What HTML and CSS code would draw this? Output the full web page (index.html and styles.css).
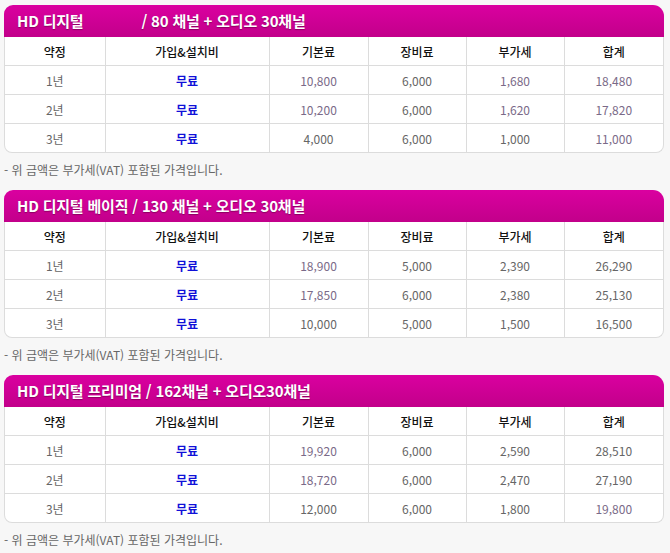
FILE: index.html
```html
<!DOCTYPE html>
<html lang="ko">
<head>
<meta charset="utf-8">
<link rel="stylesheet" href="styles.css">
</head>
<body>
<div class="page">
  <section class="plan">
    <div class="plan-title">HD 디지털<span class="gap"></span>/ 80 채널 + 오디오 30채널</div>
    <div class="table-wrap">
      <table class="price">
        <colgroup><col class="c1"><col class="c2"><col class="c3"><col class="c4"><col class="c5"><col class="c6"></colgroup>
        <thead><tr><th>약정</th><th>가입&amp;설치비</th><th>기본료</th><th>장비료</th><th>부가세</th><th>합계</th></tr></thead>
        <tbody>
          <tr><td>1년</td><td class="free">무료</td><td class="pk">10,800</td><td>6,000</td><td class="pk">1,680</td><td class="pk">18,480</td></tr>
          <tr><td>2년</td><td class="free">무료</td><td class="pk">10,200</td><td>6,000</td><td class="pk">1,620</td><td class="pk">17,820</td></tr>
          <tr><td>3년</td><td class="free">무료</td><td>4,000</td><td>6,000</td><td>1,000</td><td class="pk">11,000</td></tr>
        </tbody>
      </table>
    </div>
    <p class="note">- 위 금액은 부가세(VAT) 포함된 가격입니다.</p>
  </section>

  <section class="plan">
    <div class="plan-title">HD 디지털 베이직 / 130 채널 + 오디오 30채널</div>
    <div class="table-wrap">
      <table class="price">
        <colgroup><col class="c1"><col class="c2"><col class="c3"><col class="c4"><col class="c5"><col class="c6"></colgroup>
        <thead><tr><th>약정</th><th>가입&amp;설치비</th><th>기본료</th><th>장비료</th><th>부가세</th><th>합계</th></tr></thead>
        <tbody>
          <tr><td>1년</td><td class="free">무료</td><td class="pk">18,900</td><td>5,000</td><td>2,390</td><td>26,290</td></tr>
          <tr><td>2년</td><td class="free">무료</td><td class="pk">17,850</td><td>6,000</td><td>2,380</td><td>25,130</td></tr>
          <tr><td>3년</td><td class="free">무료</td><td>10,000</td><td>5,000</td><td>1,500</td><td>16,500</td></tr>
        </tbody>
      </table>
    </div>
    <p class="note">- 위 금액은 부가세(VAT) 포함된 가격입니다.</p>
  </section>

  <section class="plan">
    <div class="plan-title">HD 디지털 프리미엄 / 162채널 + 오디오30채널</div>
    <div class="table-wrap">
      <table class="price">
        <colgroup><col class="c1"><col class="c2"><col class="c3"><col class="c4"><col class="c5"><col class="c6"></colgroup>
        <thead><tr><th>약정</th><th>가입&amp;설치비</th><th>기본료</th><th>장비료</th><th>부가세</th><th>합계</th></tr></thead>
        <tbody>
          <tr><td>1년</td><td class="free">무료</td><td class="pk">19,920</td><td>6,000</td><td>2,590</td><td>28,510</td></tr>
          <tr><td>2년</td><td class="free">무료</td><td class="pk">18,720</td><td>6,000</td><td>2,470</td><td>27,190</td></tr>
          <tr><td>3년</td><td class="free">무료</td><td>12,000</td><td>6,000</td><td>1,800</td><td class="pk">19,800</td></tr>
        </tbody>
      </table>
    </div>
    <p class="note">- 위 금액은 부가세(VAT) 포함된 가격입니다.</p>
  </section>
</div>
</body>
</html>
```

FILE: styles.css
```css
html, body {
  margin: 0;
  padding: 0;
  background: #f7f7f7;
}
body {
  font-family: "Noto Sans CJK KR", "Noto Sans", sans-serif;
  color: #555;
}
.page {
  padding: 5px 6px 0 4px;
}
.plan {
  margin: 0 0 11px 0;
}
.plan-title {
  height: 32px;
  line-height: 31px;
  padding-left: 13px;
  color: #fff;
  font-size: 15px;
  font-weight: 700;
  letter-spacing: -0.2px;
  background: linear-gradient(#da00a0, #c2008a);
  border-radius: 9px 11px 0 0;
  text-shadow: 0 1px 1px rgba(80, 0, 50, 0.5);
  white-space: nowrap;
}
.gap {
  display: inline-block;
  width: 58px;
}
.table-wrap {
  background: #fff;
  border: 1px solid #dcdcdc;
  border-top: none;
  border-radius: 0 0 8px 8px;
  overflow: hidden;
}
.price {
  width: 100%;
  border-collapse: collapse;
  table-layout: fixed;
}
.c1 { width: 100px; }
.c2 { width: 164px; }
.c3 { width: 99px; }
.c4 { width: 98px; }
.c5 { width: 98px; }
.c6 { width: auto; }
.price th, .price td {
  height: 28px;
  padding: 0;
  text-align: center;
  vertical-align: middle;
  font-size: 12px;
  border-right: 1px solid #dcdcdc;
  border-bottom: 1px solid #dcdcdc;
}
.price th:last-child, .price td:last-child {
  border-right: none;
}
.price tbody tr:last-child td {
  border-bottom: none;
}
.price th {
  color: #111;
  font-weight: 500;
}
.price td {
  color: #666;
  font-weight: 400;
}
.price td.pk {
  color: #7a6a88;
}
.price td.free {
  color: #1010d8;
  font-weight: 700;
}
.note {
  margin: 8px 0 0 0;
  line-height: 18px;
  font-size: 12px;
  color: #666;
}
```
